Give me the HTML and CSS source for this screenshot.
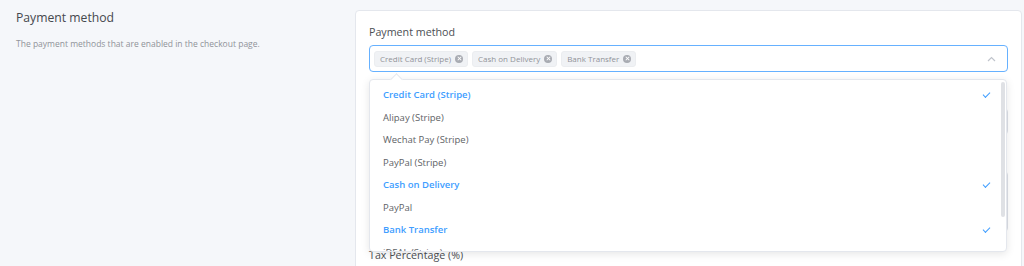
FILE: index.html
```html
<!DOCTYPE html>
<html lang="en">
<head>
    <meta charset="UTF-8">
    <meta name="viewport" content="width=device-width, initial-scale=1.0">
    <title>Checkout Settings</title>
    <link rel="stylesheet" href="styles.css">
</head>
<body>
    <div class="settings-row">
        <div class="settings-info">
            <h2>Payment method</h2>
            <p>The payment methods that are enabled in the checkout page.</p>
        </div>

        <div class="settings-card">
            <div class="form-item">
                <label class="form-label">Payment method</label>
                <div class="select-wrap">
                    <div class="select is-focus">
                        <span class="tag">Credit Card (Stripe) <i class="tag-close"></i></span>
                        <span class="tag">Cash on Delivery <i class="tag-close"></i></span>
                        <span class="tag">Bank Transfer <i class="tag-close"></i></span>
                        <svg class="select-arrow" width="9" height="6" viewBox="0 0 9 6">
                            <path d="M1 5 L4.5 1.5 L8 5" fill="none" stroke="#c0c4cc" stroke-width="1.2"/>
                        </svg>
                    </div>

                    <div class="dropdown">
                        <div class="popper-arrow"></div>
                        <ul class="dropdown-list">
                            <li class="selected">Credit Card (Stripe)</li>
                            <li>Alipay (Stripe)</li>
                            <li>Wechat Pay (Stripe)</li>
                            <li>PayPal (Stripe)</li>
                            <li class="selected">Cash on Delivery</li>
                            <li>PayPal</li>
                            <li class="selected">Bank Transfer</li>
                            <li>iDEAL (Stripe)</li>
                            <li>Bancontact (Stripe)</li>
                        </ul>
                        <div class="scrollbar-thumb"></div>
                    </div>
                </div>
            </div>

            <div class="form-item">
                <label class="form-label">Default payment method</label>
                <div class="input"></div>
            </div>

            <div class="form-item">
                <label class="form-label">Bank transfer instructions</label>
                <div class="textarea"></div>
            </div>

            <div class="form-item">
                <label class="form-label">Tax Percentage (%)</label>
                <div class="input"></div>
            </div>
        </div>
    </div>
</body>
</html>
```

FILE: styles.css
```css
body {
    margin: 0;
    font-family: "Open Sans", "Liberation Sans", sans-serif;
    background: #f5f7fa;
    color: #606266;
    height: 266px;
    overflow: hidden;
}

.settings-row {
    display: flex;
    padding-top: 10px;
}

.settings-info {
    width: 355px;
    flex-shrink: 0;
    box-sizing: border-box;
    padding: 0 16px;
}

.settings-info h2 {
    margin: -2px 0 0;
    font-size: 12.2px;
    line-height: 20px;
    font-weight: 500;
    color: #45484d;
}

.settings-info p {
    margin: 10px 0 0;
    font-size: 8.5px;
    line-height: 12px;
    color: #909399;
}

.settings-card {
    width: 667px;
    box-sizing: border-box;
    background: #fff;
    border: 1px solid #e4e7ed;
    border-radius: 4px;
    padding: 12px 13px 20px;
}

.form-item {
    margin-bottom: 14px;
}

.form-label {
    display: block;
    font-size: 10.7px;
    line-height: 18px;
    color: #4c4f54;
    margin-bottom: 4px;
}

.select-wrap {
    position: relative;
}

.select {
    display: flex;
    align-items: center;
    gap: 4px;
    height: 27px;
    box-sizing: border-box;
    border: 1px solid #dcdfe6;
    border-radius: 4px;
    padding: 0 4px;
}

.select.is-focus {
    border-color: #66b1ff;
}

.tag {
    display: inline-flex;
    align-items: center;
    gap: 4px;
    height: 16px;
    box-sizing: border-box;
    padding: 0 4px 0 5px;
    background: #f0f2f5;
    border: 1px solid #ebedf0;
    border-radius: 3px;
    font-size: 8px;
    color: #909399;
}

.tag-close {
    position: relative;
    width: 8px;
    height: 8px;
    border-radius: 50%;
    background: #a8abb2;
}

.tag-close::before,
.tag-close::after {
    content: "";
    position: absolute;
    left: 3.5px;
    top: 1.5px;
    width: 1px;
    height: 5px;
    background: #fff;
    transform: rotate(45deg);
}

.tag-close::after {
    transform: rotate(-45deg);
}

.select-arrow {
    margin-left: auto;
    margin-right: 7px;
}

.input {
    height: 27px;
    box-sizing: border-box;
    border: 1px solid #dcdfe6;
    border-radius: 4px;
}

.textarea {
    height: 61px;
    box-sizing: border-box;
    border: 1px solid #dcdfe6;
    border-radius: 4px;
}

.dropdown {
    position: absolute;
    top: calc(100% + 7px);
    left: 0;
    right: 1px;
    background: #fff;
    border: 1px solid #e4e7ed;
    border-radius: 4px;
    box-shadow: 0 2px 8px rgba(0, 0, 0, 0.1);
    padding: 4px 0 0;
    z-index: 10;
}

.popper-arrow {
    position: absolute;
    top: -5px;
    left: 22px;
    width: 8px;
    height: 8px;
    background: #fff;
    border-left: 1px solid #e4e7ed;
    border-top: 1px solid #e4e7ed;
    transform: rotate(45deg);
}

.dropdown-list {
    list-style: none;
    margin: 0;
    padding: 0;
    height: 167px;
    overflow: hidden;
}

.dropdown-list li {
    position: relative;
    height: 22.5px;
    line-height: 22.5px;
    padding: 0 13px;
    font-size: 9.5px;
    color: #606266;
}

.dropdown-list li.selected {
    color: #409eff;
    font-weight: 600;
}

.dropdown-list li.selected::after {
    content: "";
    position: absolute;
    right: 16px;
    top: 8px;
    width: 6px;
    height: 3px;
    border-left: 1.6px solid #409eff;
    border-bottom: 1.6px solid #409eff;
    transform: rotate(-45deg);
}

.scrollbar-thumb {
    position: absolute;
    top: 2px;
    right: 1px;
    width: 4px;
    height: 135px;
    border-radius: 2px;
    background: #dfe1e5;
}
```
